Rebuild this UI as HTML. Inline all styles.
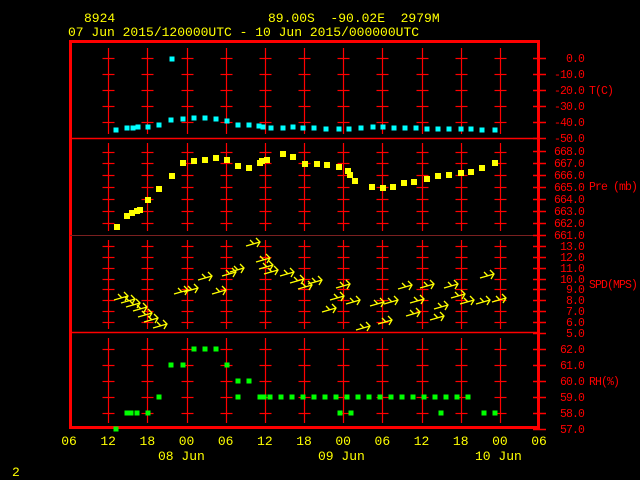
<!DOCTYPE html>
<html><head><meta charset="utf-8"><style>
html,body{margin:0;padding:0;background:#000;width:640px;height:480px;overflow:hidden}
svg{display:block}
text{font-family:"Liberation Mono",monospace;font-size:13px}
text.r{font-size:11.5px;letter-spacing:-0.9px}
</style></head><body>
<svg id="s" width="640" height="480" xmlns="http://www.w3.org/2000/svg">
<text x="84" y="22" fill="#ffff00">8924</text>
<text x="268" y="22" fill="#ffff00" xml:space="preserve">89.00S  -90.02E  2979M</text>
<text x="68" y="36" fill="#ffff00">07 Jun 2015/120000UTC - 10 Jun 2015/000000UTC</text>
<text x="12" y="476" fill="#ffff00">2</text>
<g fill="#ff0000">
<text class="r" x="589" y="94">T(C)</text>
<text class="r" x="589" y="190">Pre (mb)</text>
<text class="r" x="589" y="288">SPD(MPS)</text>
<text class="r" x="589" y="385">RH(%)</text>
</g>
<g fill="#ffff00">
<text x="158" y="460">08 Jun</text>
<text x="318" y="460">09 Jun</text>
<text x="475" y="460">10 Jun</text>
</g>
<g id="g"></g>
</svg>
<script>
var g=document.getElementById('g'),h='';
function L(x1,y1,x2,y2,c,w){h+='<line x1="'+x1+'" y1="'+y1+'" x2="'+x2+'" y2="'+y2+'" stroke="'+c+'" stroke-width="'+(w||1)+'"/>';}
function R(x,y,c,s){s=s||5;h+='<rect x="'+(x-s/2)+'" y="'+(y-s/2)+'" width="'+s+'" height="'+s+'" fill="'+c+'"/>';}
function T(x,y,t,c,a,cl){h+='<text '+(cl?'class="'+cl+'" ':'')+'x="'+x+'" y="'+y+'" fill="'+c+'" text-anchor="'+(a||'end')+'">'+t+'</text>';}
var red='#ff0000';
var lv=[58,74,90,106,122,152,163,175,187,199,211,223,246,257,268,279,289,300,311,322,349,365,381,397,413];
var segs=[[48,134],[143,231],[240,329],[338,423]];
for(var k=1;k<=11;k++){var x=Math.round(69+39.17*k)+0.5;
 segs.forEach(function(s){L(x,s[0],x,s[1],red,1.2);});
 lv.forEach(function(y){L(x-6,y+0.5,x+6,y+0.5,red,1.2);});}
h+='<rect x="70.5" y="41.5" width="468" height="386" fill="none" stroke="'+red+'" stroke-width="3"/>';
L(70,138.5,539,138.5,red,1.5);L(70,235.5,539,235.5,'#7a2020',1);L(70,332.5,539,332.5,red,1.5);
var labs=[[58,'0.0'],[74,'-10.0'],[90,'-20.0'],[106,'-30.0'],[122,'-40.0'],[138,'-50.0'],[151,'668.0'],[163,'667.0'],[175,'666.0'],[187,'665.0'],[199,'664.0'],[211,'663.0'],[223,'662.0'],[235,'661.0'],[246,'13.0'],[257,'12.0'],[268,'11.0'],[279,'10.0'],[289,'9.0'],[300,'8.0'],[311,'7.0'],[322,'6.0'],[333,'5.0'],[349,'62.0'],[365,'61.0'],[381,'60.0'],[397,'59.0'],[413,'58.0'],[429,'57.0']];
labs.forEach(function(a){L(533,a[0]+0.5,546,a[0]+0.5,red,1.5);T(584,a[0]+4,a[1],red,'end','r');});
var bl=['06','12','18','00','06','12','18','00','06','12','18','00','06'];
bl.forEach(function(t,i){T(69+39.17*i,445,t,'#ffff00','middle');});
var tp=[[116,130],[127,128],[133,128],[138,127],[148,127],[159,125],[171,120],[183,119],[194,118],[205,118],[216,119],[227,121],[238,125],[249,125],[259,126],[263,127],[271,128],[283,128],[293,127],[303,128],[314,128],[326,129],[339,129],[349,129],[361,128],[373,127],[383,127],[394,128],[405,128],[416,128],[427,129],[438,129],[449,129],[461,129],[471,129],[482,130],[495,130],[172,59]];
tp.forEach(function(p){R(p[0],p[1],'#00ffff');});
var pp=[[117,227],[127,216],[132,213],[137,211],[140,210],[148,200],[159,189],[172,176],[183,163],[194,161],[205,160],[216,158],[227,160],[238,166],[249,168],[260,163],[262,161],[267,160],[283,154],[293,157],[305,164],[317,164],[327,165],[339,167],[348,171],[350,175],[355,181],[372,187],[383,188],[393,187],[404,183],[414,182],[427,179],[438,176],[449,175],[461,173],[471,172],[482,168],[495,163]];
pp.forEach(function(p){R(p[0],p[1],'#ffff00',6);});
var gp=[[116,429],[127,413],[131,413],[137,413],[148,413],[340,413],[351,413],[441,413],[484,413],[495,413],[159,397],[238,397],[260,397],[264,397],[238,381],[249,381],[171,365],[183,365],[227,365],[194,349],[205,349],[216,349]];
for(var x=270;x<=475;x+=11)gp.push([x,397]);
gp.forEach(function(p){R(p[0],p[1],'#00ff00',5);});
var wa=[[128,296],[135,299],[140,303],[147,307],[152,313],[158,318],[167,324],[188,290],[198,288],[212,276],[226,290],[236,272],[244,268],[260,242],[270,258],[273,265],[278,270],[294,272],[304,279],[312,285],[322,280],[336,308],[344,296],[350,284],[360,300],[370,326],[384,302],[398,300],[412,285],[424,299],[434,284],[448,305],[458,284],[474,300],[494,274],[506,298],[490,300],[465,294],[392,320],[420,312],[444,316]];
wa.forEach(function(p){var x=p[0],y=p[1];h+='<path d="M'+(x-14)+' '+(y+4)+' L'+x+' '+y+' M'+(x-4)+' '+(y-4)+' L'+x+' '+y+' L'+(x-3)+' '+(y+5)+' M'+(x-10)+' '+(y-2)+' L'+(x-6)+' '+(y+2)+'" stroke="#ffff00" stroke-width="1.3" fill="none"/>';});
g.innerHTML=h;
</script>
</body></html>
